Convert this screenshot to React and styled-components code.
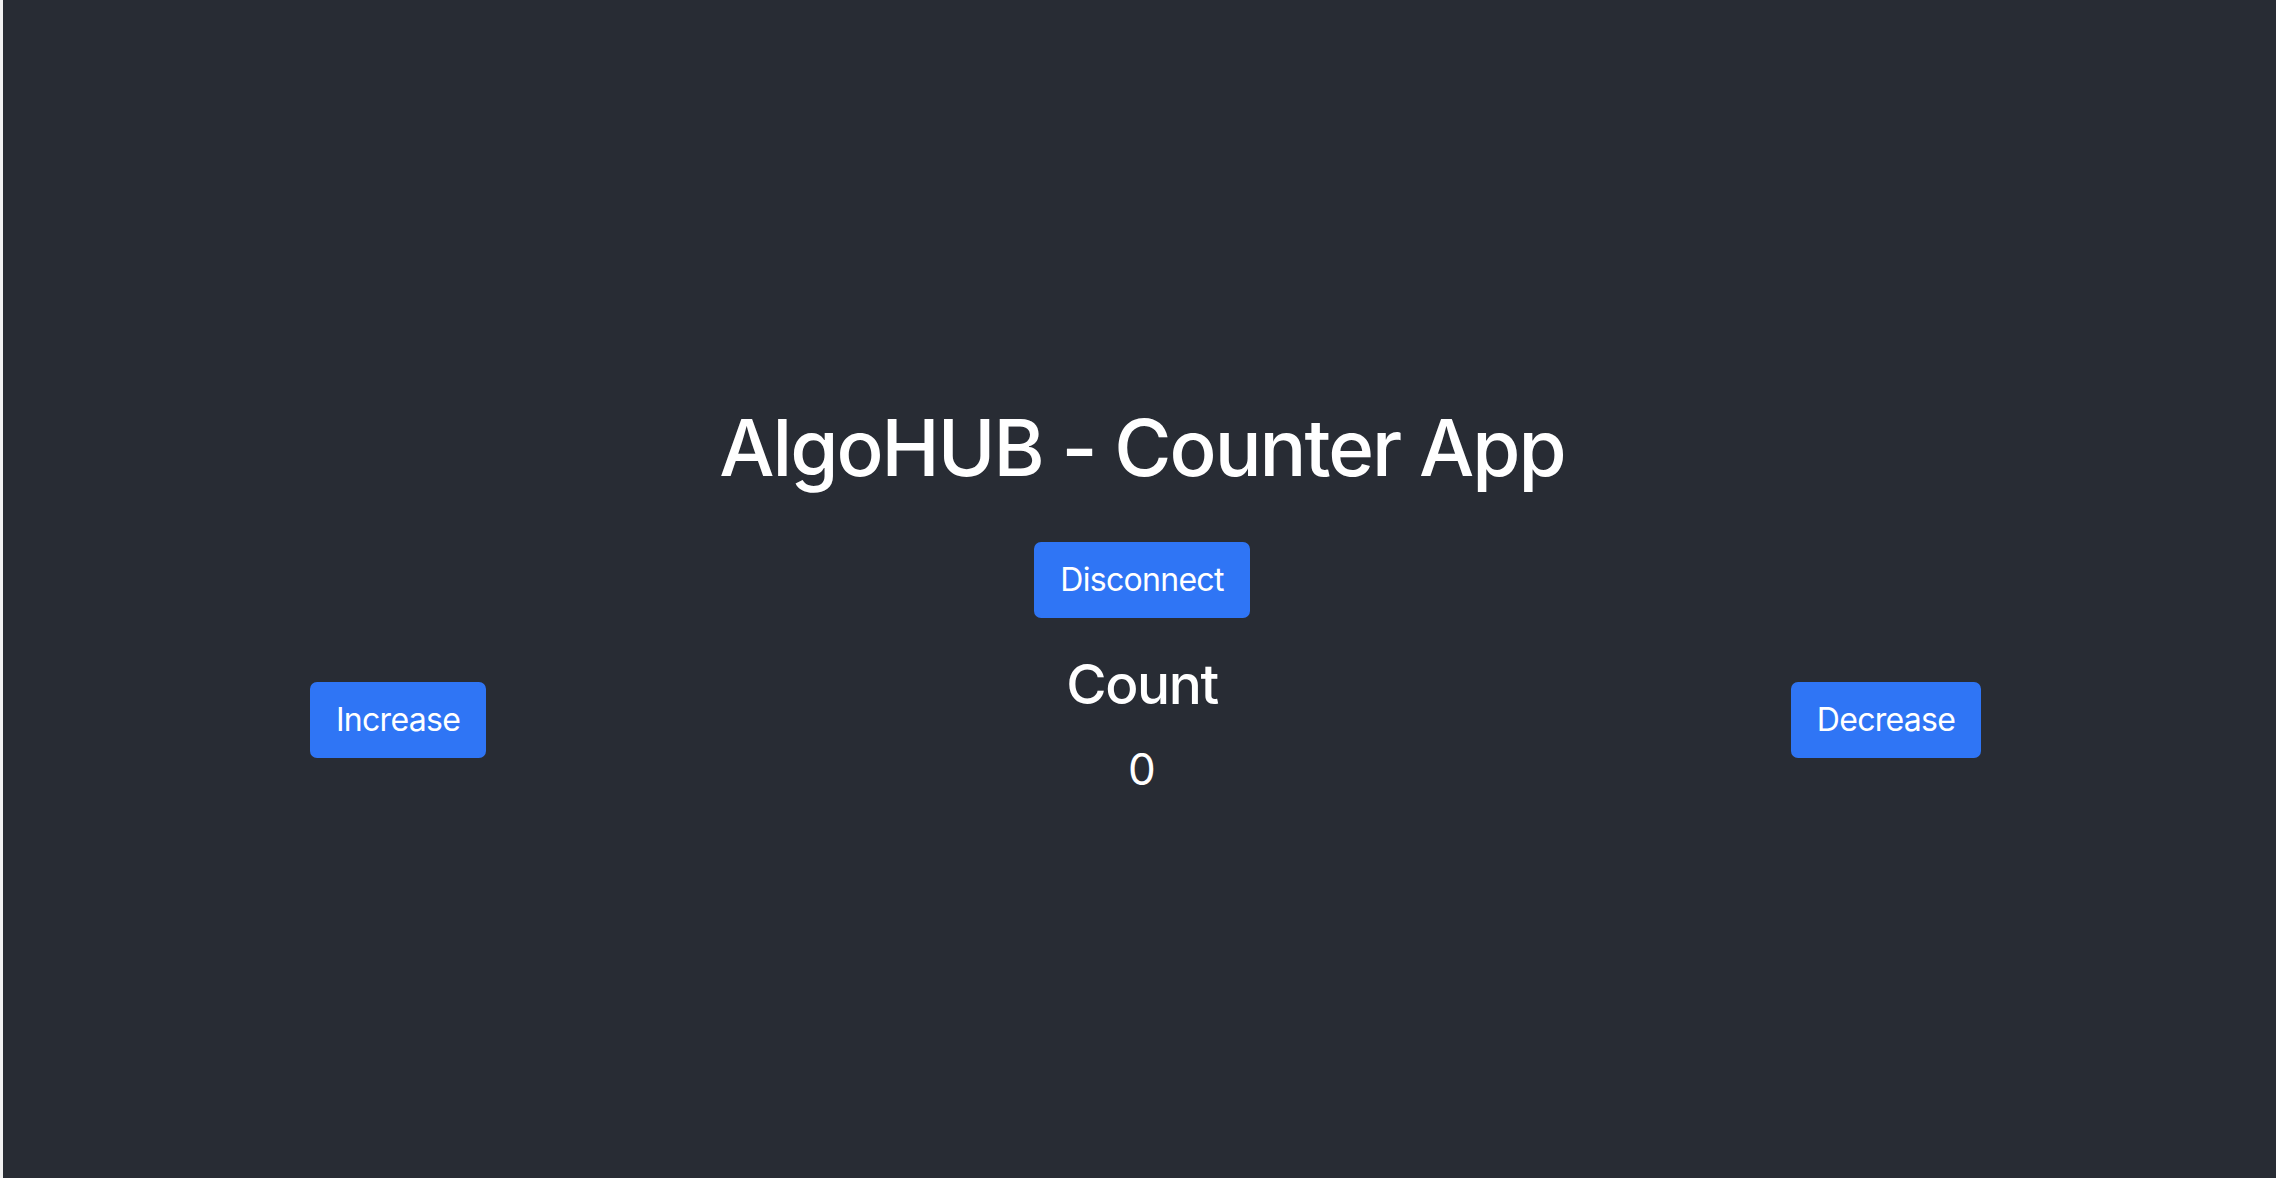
import styled, { createGlobalStyle } from 'styled-components';

const GlobalStyle = createGlobalStyle`
  html, body {
    margin: 0;
    padding: 0;
    background: #f2f2f2;
  }
  * { box-sizing: border-box; }
`

export default function App() {
  return (
    <>
      <GlobalStyle />
      <Page>
        <Title>AlgoHUB - Counter App</Title>
        <Button>Disconnect</Button>
        <CounterRow>
          <SideCell>
            <Button>Increase</Button>
          </SideCell>
          <CountBlock>
            <CountLabel>Count</CountLabel>
            <CountValue>0</CountValue>
          </CountBlock>
          <SideCell>
            <Button>Decrease</Button>
          </SideCell>
        </CounterRow>
      </Page>
    </>
  )
}

const Page = styled.div`
  margin-left: 3px;
  min-height: 100vh;
  padding: 19px 18px 0 23px;
  background: #282c34;
  color: #fff;
  font-family: Inter, "Noto Sans", sans-serif;
  display: flex;
  flex-direction: column;
  align-items: center;
  justify-content: center;
`

const Title = styled.h1`
  margin: 0 0 47px;
  font-size: 78px;
  font-weight: 500;
  line-height: 1.2;
  letter-spacing: -2px;
`

const Button = styled.button`
  height: 76px;
  padding: 0 24px;
  border: 2px solid #2f75f5;
  border-radius: 7px;
  background: #2f75f5;
  color: #fff;
  font-family: Inter, "Noto Sans", sans-serif;
  font-size: 32px;
  font-weight: 400;
  line-height: 1.5;
  letter-spacing: -0.7px;
  cursor: pointer;
`

const CounterRow = styled.div`
  width: 100%;
  margin-top: 33px;
  display: grid;
  grid-template-columns: 1fr 1fr 1fr;
  align-items: start;
`

const SideCell = styled.div`
  display: flex;
  justify-content: center;
  padding-top: 31px;
`

const CountBlock = styled.div`
  display: flex;
  flex-direction: column;
  align-items: center;
`

const CountLabel = styled.h3`
  margin: 0 0 26px;
  font-size: 55px;
  font-weight: 500;
  line-height: 1.2;
  letter-spacing: -1.4px;
`

const CountValue = styled.p`
  margin: 0;
  font-size: 44px;
  line-height: 1.2;
`
